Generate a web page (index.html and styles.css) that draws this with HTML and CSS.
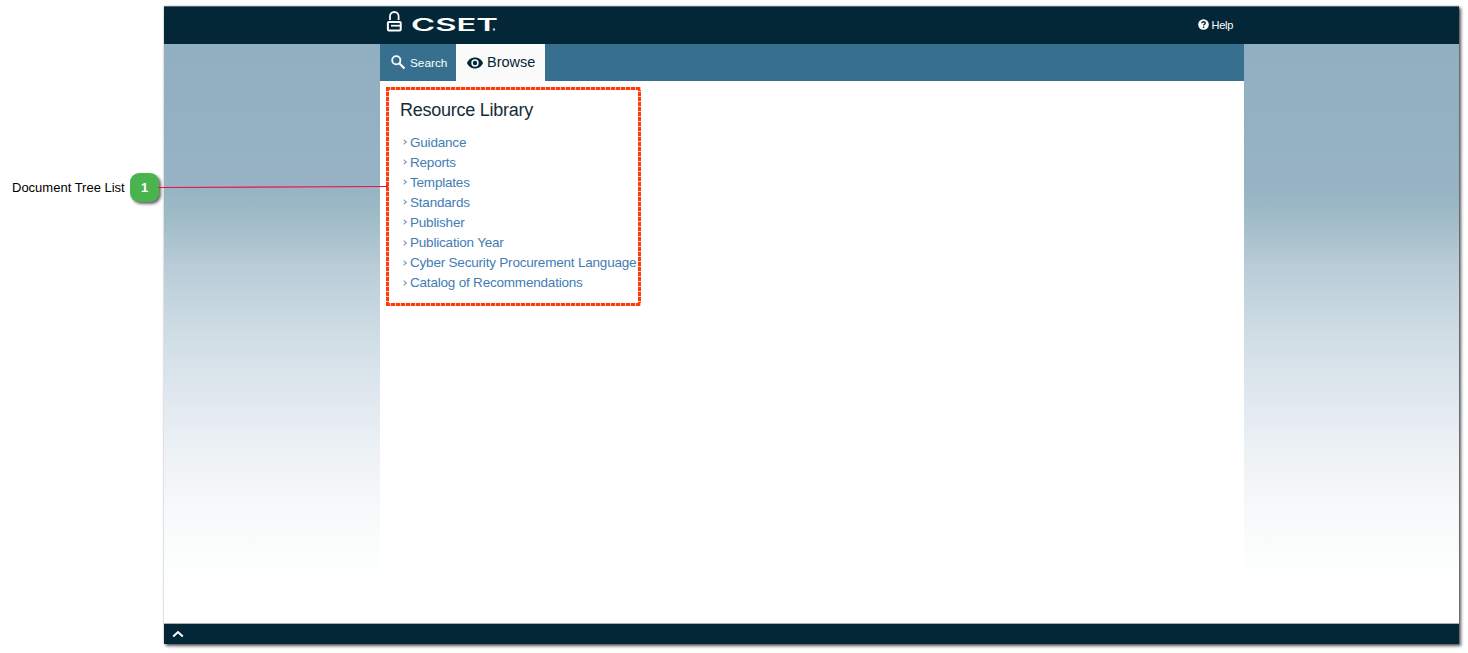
FILE: index.html
```html
<!DOCTYPE html>
<html lang="en">
<head>
<meta charset="utf-8">
<title>CSET Resource Library</title>
<link rel="stylesheet" href="styles.css">
</head>
<body>
<div class="page">
  <aside class="legend">
    <span class="legend-label">Document Tree List</span>
    <span class="badge">1</span>
  </aside>
  <div class="window">
    <header class="topbar">
      <div class="brand">
        <svg class="lock" width="16" height="22" viewBox="0 0 16 22" fill="none" stroke="#fff">
          <path d="M4 9V5.300a4.300 4.300 0 0 1 8.600 0V9" stroke-width="1.800"/>
          <rect x="1.900" y="11" width="12.800" height="8.600" rx="1" stroke-width="2"/>
          <path d="M5 14.700H14" stroke-width="1.700"/>
        </svg>
        <svg class="wordmark" width="88" height="24" viewBox="0 0 88 24">
          <text x="-1" y="19.800" textLength="87" lengthAdjust="spacingAndGlyphs">CSET</text>
          <circle cx="82" cy="18.500" r="1.200"/>
        </svg>
      </div>
      <a class="help">
        <svg width="11" height="11" viewBox="0 0 11 11"><circle cx="5.5" cy="5.5" r="5.3" fill="#fff"/><path d="M3.8 4.2c.1-2 3.5-2 3.5 0 0 1.1-1.7 1.1-1.7 2.3M5.6 7.6v1.3" fill="none" stroke="#042737" stroke-width="1.4"/></svg>
        <span>Help</span>
      </a>
    </header>
    <div class="body">
      <main class="column">
        <nav class="tabs">
          <a class="tab search">
            <svg width="15" height="15" viewBox="0 0 15 15" fill="none" stroke="#fff"><circle cx="5.3" cy="5.3" r="4.1" stroke-width="1.8"/><path d="M8.5 8.5l5 5" stroke-width="2.2"/></svg>
            <span>Search</span>
          </a>
          <a class="tab browse">
            <svg width="16" height="12" viewBox="0 0 16 12"><path fill="#042737" fill-rule="evenodd" d="M8 .5C4.4.5 1.3 2.7 0 6c1.300 3.300 4.400 5.500 8 5.500S14.700 9.300 16 6C14.700 2.700 11.600.5 8 .5zM8 9.700a3.700 3.700 0 1 1 0-7.400 3.700 3.700 0 0 1 0 7.400z"/><circle cx="8" cy="6" r="2.2" fill="#042737"/></svg>
            <span>Browse</span>
          </a>
        </nav>
        <section class="library">
          <h1>Resource Library</h1>
          <ul class="tree">
            <li><i class="chevron"></i><a>Guidance</a></li>
            <li><i class="chevron"></i><a>Reports</a></li>
            <li><i class="chevron"></i><a>Templates</a></li>
            <li><i class="chevron"></i><a>Standards</a></li>
            <li><i class="chevron"></i><a>Publisher</a></li>
            <li><i class="chevron"></i><a>Publication Year</a></li>
            <li><i class="chevron"></i><a>Cyber Security Procurement Language</a></li>
            <li><i class="chevron"></i><a>Catalog of Recommendations</a></li>
          </ul>
        </section>
      </main>
    </div>
    <footer class="bottombar">
      <svg width="12" height="8" viewBox="0 0 12 8" fill="none" stroke="#fff" stroke-width="2"><path d="M1.200 6.500L6 2l4.800 4.500"/></svg>
    </footer>
  </div>
  <svg class="connector" width="230" height="4" viewBox="0 0 230 4"><path d="M0 2.500L230 1.500" stroke="#f01048" stroke-width="1.200"/></svg>
</div>
</body>
</html>
```
FILE: styles.css
```css
* { box-sizing: border-box; }
body { margin: 0; background: #fff; font-family: "Liberation Sans", Arial, sans-serif; }
.page { position: relative; display: flex; width: 1468px; height: 653px; padding-top: 6px; overflow: hidden; }
.legend { display: flex; width: 164px; height: 30px; margin-top: 166px; padding-left: 12px; align-items: center; flex: none; }
.legend-label { width: 118px; font-size: 13px; white-space: nowrap; color: #000; }
.badge { display: flex; width: 29px; height: 29px; align-items: center; justify-content: center; border-radius: 9px; background: #49b44e; box-shadow: 2px 2px 3px rgba(0, 0, 0, 0.6); color: #fff; font-size: 13px; font-weight: bold; }
.window { display: flex; flex-direction: column; width: 1295px; height: 638px; flex: none; box-shadow: 2px 2px 3px rgba(0, 0, 0, 0.65), 0 0 2px rgba(0, 0, 0, 0.25); }
.topbar { display: flex; height: 38px; padding: 0 226px 0 222px; justify-content: space-between; background: #042737; border-top: 1px solid #526a73; flex: none; }
.brand { display: flex; gap: 10px; padding-top: 4px; }
.wordmark text { fill: #fff; font-family: Inter, "Liberation Sans", sans-serif; font-size: 17px; font-weight: 600; }
.wordmark circle { fill: #b9c8d0; }
.help { display: flex; height: 35px; align-items: center; gap: 3px; color: #fff; font-size: 11px; letter-spacing: -0.3px; }
.body { flex: 1; padding-left: 216px; background: linear-gradient(#90afc1 0, #97b3c5 143px, #97b5c4 150px, #9ebbc6 172px, #b9ccd7 222px, #c5d5df 259px, #d1dee5 297px, #e0e8ef 353px, #edf2f5 410px, #f7f9fa 466px, #fdfefe 523px, #fff 560px); }
.column { width: 864px; height: 100%; background: #fff; }
.tabs { display: flex; height: 37px; background: #37708f; }
.tab { display: flex; align-items: center; }
.search { width: 76px; padding-left: 11px; gap: 4px; color: #fff; font-size: 11.800px; }
.search span { padding-top: 1px; }
.browse { width: 89px; padding-left: 11px; gap: 4px; background: #fafafa; color: #042737; font-size: 14.500px; }
.browse span { padding-bottom: 2px; }
.library { width: 255px; height: 219px; margin: 6px 0 0 6px; padding: 12px 0 0 14px; background:
  repeating-linear-gradient(90deg, #ff3b0a 0 4px, #ffc2b2 4px 5px) 0 0 / 100% 3px no-repeat,
  repeating-linear-gradient(90deg, #ff3b0a 0 4px, #ffc2b2 4px 5px) 0 100% / 100% 3px no-repeat,
  repeating-linear-gradient(#ff3b0a 0 4px, #ffc2b2 4px 5px) 0 0 / 3px 100% no-repeat,
  repeating-linear-gradient(#ff3b0a 0 4px, #ffc2b2 4px 5px) 100% 0 / 3px 100% no-repeat; }
.library h1 { margin: 0; color: #142c3b; font-size: 18px; font-weight: normal; line-height: 22px; letter-spacing: -0.250px; }
.tree { margin: 11px 0 0; padding: 0; list-style: none; }
.tree li { display: flex; height: 20.120px; padding-left: 2px; align-items: center; white-space: nowrap; color: #427cb4; font-size: 13.500px; letter-spacing: -0.200px; }
.chevron { width: 4px; height: 4px; margin-right: 4px; flex: none; border: solid #7796b2; border-width: 1px 1px 0 0; transform: rotate(45deg); }
.bottombar { display: flex; height: 21px; padding: 6px 8px; border-top: 1px solid #a5b1b7; background: #042737; flex: none; }
.connector { position: absolute; left: 158px; top: 185px; }
```
